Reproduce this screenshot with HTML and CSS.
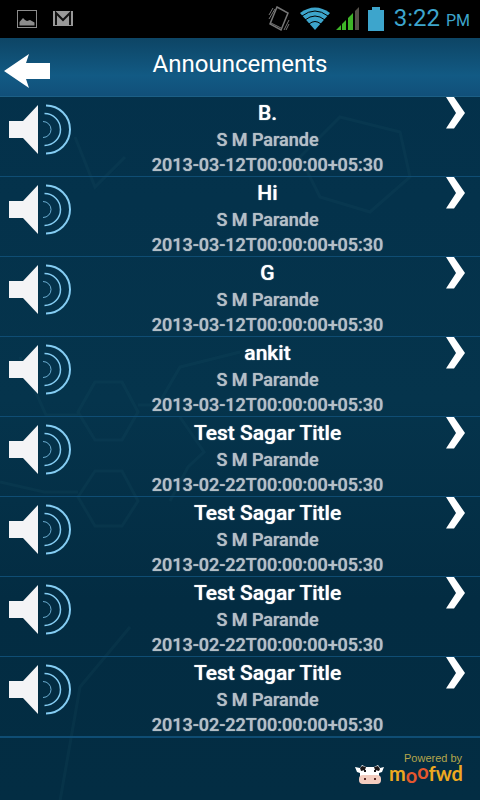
FILE: index.html
```html
<!DOCTYPE html>
<html lang="en">

<head>
  <meta charset="UTF-8">
  <meta name="viewport" content="width=device-width, initial-scale=1.0">
  <title>Announcements</title>
  <link rel="stylesheet" href="styles.css">
</head>

<body>
  <!-- shared icons -->
  <svg class="icons" width="0" height="0" aria-hidden="true">
    <symbol id="speaker" viewBox="0 0 64 52">
      <path d="M1 18H15L30 2V51L15 35H1Z" fill="#f4f4f6" />
      <g fill="none" stroke="#84ccf2">
        <path d="M35 18.500A8 8 0 0 1 35 34.500" stroke-width="1" opacity=".8" />
        <path d="M36.500 10.500A16 16 0 0 1 36.500 42.500" stroke-width="1.500" />
        <path d="M38 2.500A24 24 0 0 1 38 50.500" stroke-width="2" />
      </g>
    </symbol>
    <symbol id="chevron" viewBox="0 0 21 32">
      <path d="M1 0H9L20 16L9 31.500H1L11 16Z" fill="#fff" />
    </symbol>
  </svg>

  <div class="status-bar">
    <svg width="20" height="20" viewBox="0 0 20 20">
      <rect x=".5" y="1.500" width="19" height="17" fill="none" stroke="#8c8c8c" />
      <path d="M2.500 16.500V13L6 9L8 11L10 12L13 11L17.500 13.500V16.500Z" fill="#8c8c8c" />
    </svg>
    <svg class="mail" width="20" height="20" viewBox="0 0 20 20">
      <rect y="2" width="20" height="15" fill="#999" />
      <path d="M3 16V4L10 11L17 4V16" fill="none" stroke="#111" stroke-width="2" />
    </svg>
    <span class="spacer"></span>
    <svg width="22" height="26" viewBox="0 0 22 26" fill="none" stroke="#777">
      <path d="M9 1L20 7L13 24L2 18Z" stroke-width="1.500" />
      <path d="M3 17L13 22M1 9L5 2M1 13L7 3M16 24L21 14M18 24L21 18" />
    </svg>
    <svg class="wifi" width="30" height="24" viewBox="0 0 30 24">
      <path d="M0 6Q15 -5 30 6L15 23Z" fill="#3da5cc" />
      <path d="M2 9Q15 -1 28 9M5 13Q15 5 25 13M9 17Q15 12 21 17" fill="none" stroke="#000" stroke-width="1" />
    </svg>
    <svg class="signal" width="24" height="24" viewBox="0 0 24 24">
      <path d="M0 23L5 18V23ZM6 23V17L10 13V23ZM12 23V11L17 6V23Z" fill="#3eb428" />
      <path d="M19 23V4L23 0V23Z" fill="#555049" />
    </svg>
    <svg class="battery" width="16" height="24" viewBox="0 0 16 24">
      <path d="M0 3H4V0H12V3H16V24H0Z" fill="#3da5cc" />
    </svg>
    <span class="clock">3:22 <small>PM</small></span>
  </div>

  <header class="header">
    <button class="back" type="button" aria-label="Back">
      <svg width="46" height="34" viewBox="0 0 46 34">
        <path d="M0 17L25 0L22 9H46V25H22L25 34Z" fill="#fff" />
      </svg>
    </button>
    <h1>Announcements</h1>
  </header>

  <main class="content">
    <svg class="pattern" viewBox="0 0 480 704" preserveAspectRatio="xMidYMin slice" aria-hidden="true">
      <g fill="none" stroke="#2a6a7a" stroke-width="3">
        <path d="M78 315L95 285H122L138 315L122 343H95ZM78 400L95 374H122L138 404L122 429H95Z" />
        <path d="M20 260L46 318H78M138 308H158L180 270L240 255M78 395H44L0 385M170 404L188 370L204 355L180 320" />
        <path d="M300 60L340 20L400 35L410 80L370 115L320 100ZM75 40L95 90L125 60M60 704L80 590L130 530" />
      </g>
    </svg>

    <ul class="list">
      <li><a class="item" href="#">
        <svg class="speaker"><use href="#speaker" /></svg>
        <span class="text"><b>B.</b><span>S M Parande</span><span>2013-03-12T00:00:00+05:30</span></span>
        <svg class="chevron"><use href="#chevron" /></svg>
      </a></li>
      <li><a class="item" href="#">
        <svg class="speaker"><use href="#speaker" /></svg>
        <span class="text"><b>Hi</b><span>S M Parande</span><span>2013-03-12T00:00:00+05:30</span></span>
        <svg class="chevron"><use href="#chevron" /></svg>
      </a></li>
      <li><a class="item" href="#">
        <svg class="speaker"><use href="#speaker" /></svg>
        <span class="text"><b>G</b><span>S M Parande</span><span>2013-03-12T00:00:00+05:30</span></span>
        <svg class="chevron"><use href="#chevron" /></svg>
      </a></li>
      <li><a class="item" href="#">
        <svg class="speaker"><use href="#speaker" /></svg>
        <span class="text"><b>ankit</b><span>S M Parande</span><span>2013-03-12T00:00:00+05:30</span></span>
        <svg class="chevron"><use href="#chevron" /></svg>
      </a></li>
      <li><a class="item" href="#">
        <svg class="speaker"><use href="#speaker" /></svg>
        <span class="text"><b>Test Sagar Title</b><span>S M Parande</span><span>2013-02-22T00:00:00+05:30</span></span>
        <svg class="chevron"><use href="#chevron" /></svg>
      </a></li>
      <li><a class="item" href="#">
        <svg class="speaker"><use href="#speaker" /></svg>
        <span class="text"><b>Test Sagar Title</b><span>S M Parande</span><span>2013-02-22T00:00:00+05:30</span></span>
        <svg class="chevron"><use href="#chevron" /></svg>
      </a></li>
      <li><a class="item" href="#">
        <svg class="speaker"><use href="#speaker" /></svg>
        <span class="text"><b>Test Sagar Title</b><span>S M Parande</span><span>2013-02-22T00:00:00+05:30</span></span>
        <svg class="chevron"><use href="#chevron" /></svg>
      </a></li>
      <li><a class="item" href="#">
        <svg class="speaker"><use href="#speaker" /></svg>
        <span class="text"><b>Test Sagar Title</b><span>S M Parande</span><span>2013-02-22T00:00:00+05:30</span></span>
        <svg class="chevron"><use href="#chevron" /></svg>
      </a></li>
    </ul>
  </main>

  <footer class="footer">
    <svg width="112" height="40" viewBox="0 0 112 40">
      <!-- cow head -->
      <path d="M1 15L6 16L8 13L12 15H20L24 13L26 16L30 15L28 20L25 21V29Q25 32 16 32Q6 32 6 29V21L3 20Z" fill="#fff" />
      <path d="M6 16L8 14L12 15L11 18L7 19ZM20 15L24 14L26 17L25 19L21 18Z" fill="#1b1718" />
      <path d="M10 18H12V20H10ZM20 18H22V20H20Z" fill="#1b1718" />
      <rect x="5" y="23" width="22" height="9" rx="4" fill="#f3cdc0" />
      <path d="M10 26H12V28H10ZM20 26H22V28H20Z" fill="#5a2a25" />
      <text class="powered" x="50" y="10">Powered by</text>
      <text class="brand" x="35" y="29">m<tspan class="oo" dy="2">o</tspan><tspan class="oo" dy="-4">o</tspan><tspan dy="2">fwd</tspan></text>
    </svg>
  </footer>
</body>

</html>
```

FILE: styles.css
```css
* {
  box-sizing: border-box;
}

body {
  margin: 0;
  min-height: 100vh;
  display: flex;
  flex-direction: column;
  background: linear-gradient(to bottom, #03304a, #05344c 50%, #032c42 75%, #032d43);
  font-family: Roboto, sans-serif;
  color: white;
}

svg {
  display: block;
}

.icons {
  position: absolute;
}

.status-bar {
  display: flex;
  align-items: center;
  height: 38px;
  padding: 0 10px 0 17px;
  background: #000;
}

.mail {
  margin-left: 16px;
}

.spacer {
  flex: 1;
}

.wifi {
  margin-left: 10px;
}

.signal {
  margin-left: 6px;
}

.battery {
  margin-left: 8px;
}

.clock {
  margin-left: 10px;
  font-size: 24px;
  line-height: 40px;
  color: #3da5cc;
}

.clock small {
  font-size: 16px;
}

.header {
  display: grid;
  grid-template-columns: 56px 1fr 56px;
  height: 59px;
  background: linear-gradient(to bottom, #0d4565, #125a84 65%, #11507a);
  border-bottom: 1px solid #1c5f86;
}

.back {
  padding: 8px 0 0 4px;
  border: none;
  background: none;
}

.header h1 {
  margin: 0;
  font-size: 24px;
  font-weight: normal;
  line-height: 52px;
  text-align: center;
}

.content {
  position: relative;
}

/* faint lines behind the list */
.pattern {
  position: absolute;
  top: 0;
  left: 0;
  width: 100%;
  opacity: .1;
}

.list {
  position: relative;
  margin: 0;
  padding: 0;
  list-style: none;
  border-bottom: 1px solid #0f4d74;
}

.item {
  display: grid;
  grid-template-columns: 90px 1fr 35px;
  height: 80px;
  border-bottom: 1px solid #0f4d74;
  color: #b4bfc7;
  text-decoration: none;
}

.speaker {
  width: 64px;
  height: 52px;
  margin: 6px 0 0 8px;
}

.chevron {
  width: 21px;
  height: 32px;
}

.text {
  display: flex;
  flex-direction: column;
  padding: 4px 0 0;
  font-size: 18px;
  font-weight: 500;
  line-height: 25px;
  text-align: center;
  text-shadow: 0 0 1px;
}

.text b {
  margin-bottom: 2px;
  font-size: 21px;
  font-weight: 500;
  line-height: 24px;
  color: white;
  text-shadow: 0 0 1px;
}

.footer {
  display: flex;
  justify-content: flex-end;
  padding: 14px 14px 0;
}

.powered {
  font-family: "Liberation Sans", sans-serif;
  font-size: 11px;
  fill: #b5a64c;
}

.brand {
  font-family: Lato, sans-serif;
  font-size: 20px;
  font-weight: bold;
  fill: #eda91f;
}

.oo {
  fill: #e4572e;
}
```
